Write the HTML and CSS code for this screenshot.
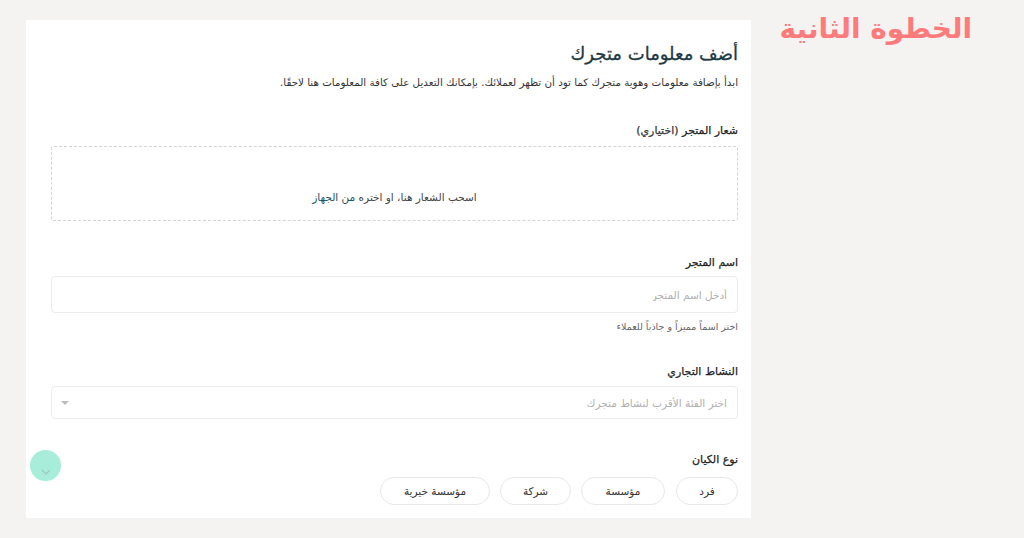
FILE: index.html
```html
<!DOCTYPE html>
<html lang="ar" dir="rtl">
<head>
    <meta charset="UTF-8">
    <meta name="viewport" content="width=device-width, initial-scale=1.0">
    <title>أضف معلومات متجرك</title>
    <link rel="stylesheet" href="styles.css">
</head>
<body>
    <div class="page">
        <div class="step-side">
            <h1 class="step-title">الخطوة الثانية</h1>
        </div>

        <div class="store-form">
            <h2 class="form-title">أضف معلومات متجرك</h2>
            <p class="form-intro">ابدأ بإضافة معلومات وهوية متجرك كما تود أن تظهر لعملائك. بإمكانك التعديل على كافة المعلومات هنا لاحقًا.</p>

            <div class="form-group logo-group">
                <label>شعار المتجر <span class="optional">(اختياري)</span></label>
                <div class="dropzone">
                    <span>اسحب الشعار هنا، او اختره <a href="#" class="link">من الجهاز</a></span>
                </div>
            </div>

            <div class="form-group name-group">
                <label for="storeName">اسم المتجر</label>
                <input type="text" id="storeName" placeholder="أدخل اسم المتجر">
                <div class="hint">اختر اسماً مميزاً و جاذباً للعملاء</div>
            </div>

            <div class="form-group activity-group">
                <label>النشاط التجاري</label>
                <div class="select-box">
                    <span class="placeholder">اختر الفئة الأقرب لنشاط متجرك</span>
                    <span class="caret"></span>
                </div>
            </div>

            <div class="form-group entity-group">
                <label>نوع الكيان</label>
                <div class="pills">
                    <button class="pill pill-sm">فرد</button>
                    <button class="pill pill-md">مؤسسة</button>
                    <button class="pill pill-sm2">شركة</button>
                    <button class="pill pill-lg">مؤسسة خيرية</button>
                </div>
            </div>

            <div class="scroll-btn">
                <svg width="10" height="6" viewBox="0 0 10 6"><path d="M1 1l4 4 4-4" fill="none" stroke="#9cc9bd" stroke-width="1.2"/></svg>
            </div>
        </div>
    </div>
</body>
</html>
```

FILE: styles.css
```css
* {
    margin: 0;
    padding: 0;
    box-sizing: border-box;
    font-family: "DejaVu Sans", sans-serif;
}

:root {
    --page-bg: #f4f3f1;
    --text-dark: #1d3a44;
    --text-color: #333;
    --muted: #aaa;
    --border-color: #e6e6e6;
    --accent: #ff7b7b;
}

body {
    background-color: var(--page-bg);
    width: 1024px;
    height: 538px;
    overflow: hidden;
}

.page {
    display: flex;
    direction: rtl;
    height: 100%;
}

.step-side {
    width: 273px;
    padding-top: 11px;
    padding-right: 52px;
}

.step-title {
    color: var(--accent);
    font-size: 28px;
    font-weight: bold;
    line-height: 36px;
}

.store-form {
    position: relative;
    background: white;
    width: 725px;
    height: 498px;
    margin-top: 20px;
    padding: 22px 13px 0 25px;
    color: var(--text-color);
}

.form-title {
    color: var(--text-dark);
    font-size: 18px;
    font-weight: normal;
    -webkit-text-stroke: 0.3px var(--text-dark);
    line-height: 24px;
}

.form-intro {
    font-size: 10.3px;
    color: #333;
    margin-top: 9px;
    line-height: 14px;
}

label {
    display: block;
    font-size: 11px;
    color: #222;
    -webkit-text-stroke: 0.25px #222;
    line-height: 14px;
    margin-bottom: 6px;
}

.optional {
    color: #444;
}

.logo-group {
    margin-top: 35px;
}

.logo-group label {
    margin-bottom: 8px;
}

.dropzone {
    height: 75px;
    border: 1px dashed #d4d4d4;
    border-radius: 3px;
    display: flex;
    justify-content: center;
    align-items: flex-end;
    padding-bottom: 17px;
    font-size: 10.5px;
    color: #444;
}

.link {
    color: #1d4f5e;
    text-decoration: none;
}

.name-group {
    margin-top: 35px;
}

input {
    display: block;
    width: 100%;
    height: 37px;
    border: 1px solid #ececec;
    border-radius: 4px;
    padding: 0 10px;
    font-size: 10.5px;
    color: #333;
    outline: none;
}

input::placeholder {
    color: #b0b0b0;
}

.hint {
    margin-top: 8px;
    font-size: 9.5px;
    color: #666;
}

.activity-group {
    margin-top: 33px;
}

.activity-group label {
    margin-bottom: 7px;
}

.select-box {
    height: 33px;
    border: 1px solid #ececec;
    border-radius: 4px;
    display: flex;
    justify-content: space-between;
    align-items: center;
    padding: 0 10px 0 9px;
    font-size: 10.5px;
}

.placeholder {
    color: #b0b0b0;
}

.caret {
    width: 0;
    height: 0;
    border-left: 4px solid transparent;
    border-right: 4px solid transparent;
    border-top: 4px solid #bbb;
}

.entity-group {
    margin-top: 34px;
}

.entity-group label {
    margin-bottom: 10px;
}

.pills {
    display: flex;
    gap: 10px;
}

.pill {
    height: 28px;
    border: 1px solid #e8e8e8;
    border-radius: 14px;
    background: white;
    font-size: 10.5px;
    color: #333;
    cursor: pointer;
}

.pill-sm { width: 62px; }
.pill-md { width: 84px; margin-right: 1px; }
.pill-sm2 { width: 71px; }
.pill-lg { width: 110px; }

.scroll-btn {
    position: absolute;
    left: 4px;
    top: 430px;
    width: 31px;
    height: 31px;
    border-radius: 50%;
    background: #a8ecda;
    display: flex;
    justify-content: center;
    align-items: flex-end;
    padding-bottom: 6px;
}
```
